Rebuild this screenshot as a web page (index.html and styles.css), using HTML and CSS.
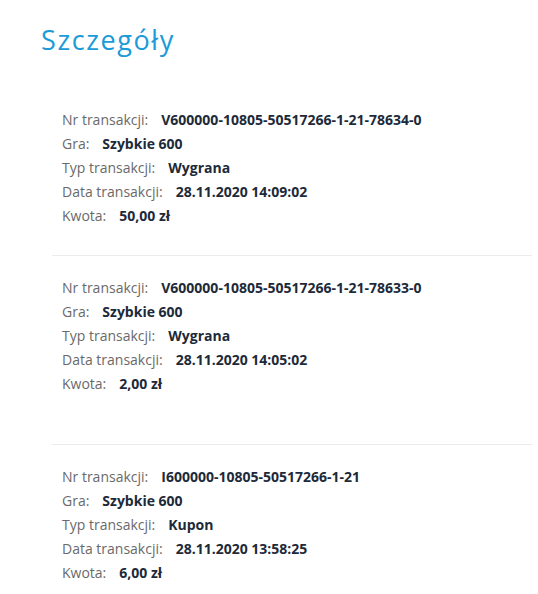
FILE: index.html
```html
<!DOCTYPE html>
<html lang="pl">
<head>
<meta charset="utf-8">
<link rel="stylesheet" href="styles.css">
</head>
<body>
<div class="page">
  <h1 class="title">Szczegóły</h1>
  <div class="list">
    <div class="item">
      <div class="row"><span class="label">Nr transakcji:</span><span class="value">V600000-10805-50517266-1-21-78634-0</span></div>
      <div class="row"><span class="label">Gra:</span><span class="value">Szybkie 600</span></div>
      <div class="row"><span class="label">Typ transakcji:</span><span class="value">Wygrana</span></div>
      <div class="row"><span class="label">Data transakcji:</span><span class="value">28.11.2020 14:09:02</span></div>
      <div class="row"><span class="label">Kwota:</span><span class="value">50,00 zł</span></div>
    </div>
    <div class="item item-tall">
      <div class="row"><span class="label">Nr transakcji:</span><span class="value">V600000-10805-50517266-1-21-78633-0</span></div>
      <div class="row"><span class="label">Gra:</span><span class="value">Szybkie 600</span></div>
      <div class="row"><span class="label">Typ transakcji:</span><span class="value">Wygrana</span></div>
      <div class="row"><span class="label">Data transakcji:</span><span class="value">28.11.2020 14:05:02</span></div>
      <div class="row"><span class="label">Kwota:</span><span class="value">2,00 zł</span></div>
    </div>
    <div class="item">
      <div class="row"><span class="label">Nr transakcji:</span><span class="value">I600000-10805-50517266-1-21</span></div>
      <div class="row"><span class="label">Gra:</span><span class="value">Szybkie 600</span></div>
      <div class="row"><span class="label">Typ transakcji:</span><span class="value">Kupon</span></div>
      <div class="row"><span class="label">Data transakcji:</span><span class="value">28.11.2020 13:58:25</span></div>
      <div class="row"><span class="label">Kwota:</span><span class="value">6,00 zł</span></div>
    </div>
  </div>
</div>
</body>
</html>
```
FILE: styles.css
```css
html, body {
  margin: 0;
  padding: 0;
  background: #ffffff;
}

.page {
  font-family: "Open Sans", "Noto Sans", sans-serif;
  padding: 22px 6px 0 41px;
}

.title {
  margin: 0;
  font-size: 27px;
  font-weight: 400;
  line-height: 36px;
  color: #1b9bd7;
  letter-spacing: 1.6px;
}

.list {
  margin-left: 11px;
  margin-top: 50px;
}

.item {
  padding: 0 0 27px 10px;
  border-bottom: 1px solid #ebebeb;
  margin-bottom: 20px;
}

.item:last-child {
  border-bottom: none;
  padding-bottom: 0;
  margin-bottom: 0;
}

.item-tall {
  padding-bottom: 48px;
}

.row {
  display: flex;
  gap: 13px;
  height: 24px;
  line-height: 24px;
  font-size: 14px;
  white-space: nowrap;
}

.label {
  color: #6a6a6a;
}

.value {
  color: #1d2a3a;
  font-weight: 700;
}
```
